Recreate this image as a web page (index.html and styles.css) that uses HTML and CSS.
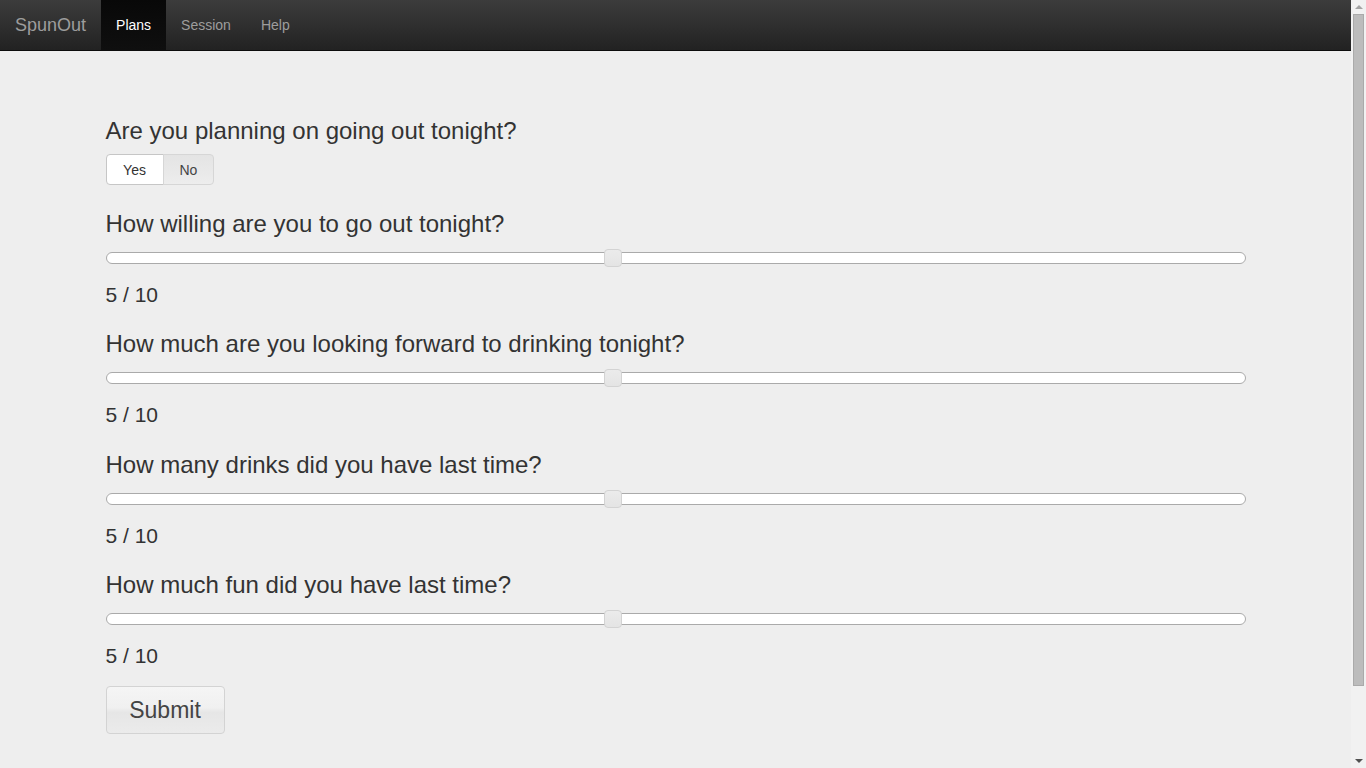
FILE: index.html
```html
<!DOCTYPE html>
<html lang="en">
<head>
<meta charset="utf-8">
<title>SpunOut</title>
<link rel="stylesheet" href="styles.css">
</head>
<body>
<div class="page">
  <nav class="navbar">
    <a class="brand" href="#">SpunOut</a>
    <ul class="nav">
      <li class="active"><a href="#">Plans</a></li>
      <li><a href="#">Session</a></li>
      <li><a href="#">Help</a></li>
    </ul>
  </nav>
  <main class="container">
    <h3 class="question">Are you planning on going out tonight?</h3>
    <div class="btn-group">
      <button class="btn btn-yes">Yes</button>
      <button class="btn btn-no">No</button>
    </div>

    <h3 class="question q-slider">How willing are you to go out tonight?</h3>
    <div class="slider"><span class="handle" style="left:44.444%"></span></div>
    <p class="value">5 / 10</p>

    <h3 class="question q-slider">How much are you looking forward to drinking tonight?</h3>
    <div class="slider"><span class="handle" style="left:44.444%"></span></div>
    <p class="value">5 / 10</p>

    <h3 class="question q-slider">How many drinks did you have last time?</h3>
    <div class="slider"><span class="handle" style="left:44.444%"></span></div>
    <p class="value">5 / 10</p>

    <h3 class="question q-slider">How much fun did you have last time?</h3>
    <div class="slider"><span class="handle" style="left:44.444%"></span></div>
    <p class="value">5 / 10</p>

    <button class="btn-submit">Submit</button>
  </main>
</div>
<div class="scrollbar" aria-hidden="true">
  <span class="arrow arrow-up"></span>
  <span class="thumb"></span>
  <span class="arrow arrow-down"></span>
</div>
</body>
</html>
```

FILE: styles.css
```css
body {
  margin: 0;
  background: #eeeeee;
  font-family: "Liberation Sans", Arial, Helvetica, sans-serif;
  font-size: 14px;
  color: #333333;
}
.page {
  margin-right: 15px;
}
.navbar {
  height: 51px;
  box-sizing: border-box;
  display: flex;
  align-items: stretch;
  background: linear-gradient(to bottom, #3c3c3c 0%, #222222 100%);
  border-bottom: 1px solid #0c0c0c;
}
.brand {
  display: flex;
  align-items: center;
  padding: 0 15px;
  font-size: 18px;
  color: #9d9d9d;
  text-decoration: none;
}
.nav {
  display: flex;
  list-style: none;
  margin: 0;
  padding: 0;
}
.nav li {
  display: flex;
}
.nav a {
  display: flex;
  align-items: center;
  padding: 0 15px;
  color: #9d9d9d;
  text-decoration: none;
  font-size: 14px;
}
.nav li.active a {
  color: #ffffff;
  background: linear-gradient(to bottom, #080808 0%, #0f0f0f 100%);
}
.container {
  width: 1140px;
  margin: 0 auto;
  padding: 67px 15px 112px;
}
.question {
  font-size: 24px;
  font-weight: 400;
  line-height: 26px;
  margin: 0 0 10px;
}
.q-slider {
  margin: 26px 0 15px;
}
.value + .q-slider {
  margin-top: 24.3px;
}
.btn-group {
  display: flex;
}
.btn {
  height: 31px;
  font-family: inherit;
  font-size: 14px;
  color: #333333;
  border: 1px solid #cfcfcf;
  padding: 0 16px;
  margin: 0;
}
.btn-yes {
  width: 58px;
  background: #ffffff;
  border-radius: 4px 0 0 4px;
  border-color: #c6c6c6;
}
.btn-no {
  width: 51px;
  margin-left: -1px;
  color: #444444;
  background: linear-gradient(to bottom, #e4e4e4 0%, #e9e9e9 60%, #ededed 100%);
  border-radius: 0 4px 4px 0;
  border-color: #d6d6d6;
}
.slider {
  position: relative;
  height: 12px;
  box-sizing: border-box;
  background: #ffffff;
  border: 1px solid #aaaaaa;
  border-radius: 6px;
}
.handle {
  position: absolute;
  top: -4px;
  width: 18px;
  height: 18px;
  margin-left: -8px;
  box-sizing: border-box;
  background: linear-gradient(to bottom, #ebebeb 0%, #e4e4e4 100%);
  border: 1px solid #d3d3d3;
  border-radius: 4px;
}
.value {
  font-size: 21px;
  line-height: 24px;
  margin: 19px 0 0;
}
.btn-submit {
  display: block;
  margin-top: 18.5px;
  width: 119px;
  height: 48px;
  font-family: inherit;
  font-size: 23px;
  color: #444444;
  border: 1px solid #d3d3d3;
  border-radius: 4px;
  background: linear-gradient(to bottom, #f5f5f5 0%, #f0f0f0 45%, #e6e6e6 55%, #ebebeb 100%);
  padding: 0;
}
.scrollbar {
  position: fixed;
  top: 0;
  right: 0;
  bottom: 0;
  width: 15px;
  background: #f1f1f1;
  display: flex;
  flex-direction: column;
  align-items: center;
}
.arrow {
  width: 0;
  height: 0;
  border-left: 4px solid transparent;
  border-right: 4px solid transparent;
}
.arrow-up {
  margin-top: 5px;
  border-bottom: 4px solid #a3a3a3;
}
.arrow-down {
  margin-bottom: 5px;
  border-top: 4px solid #505050;
}
.thumb {
  width: 9px;
  height: 670px;
  margin: 5px 0 auto;
  background: #bcbcbc;
  border: 1px solid #aaaaaa;
}
```
